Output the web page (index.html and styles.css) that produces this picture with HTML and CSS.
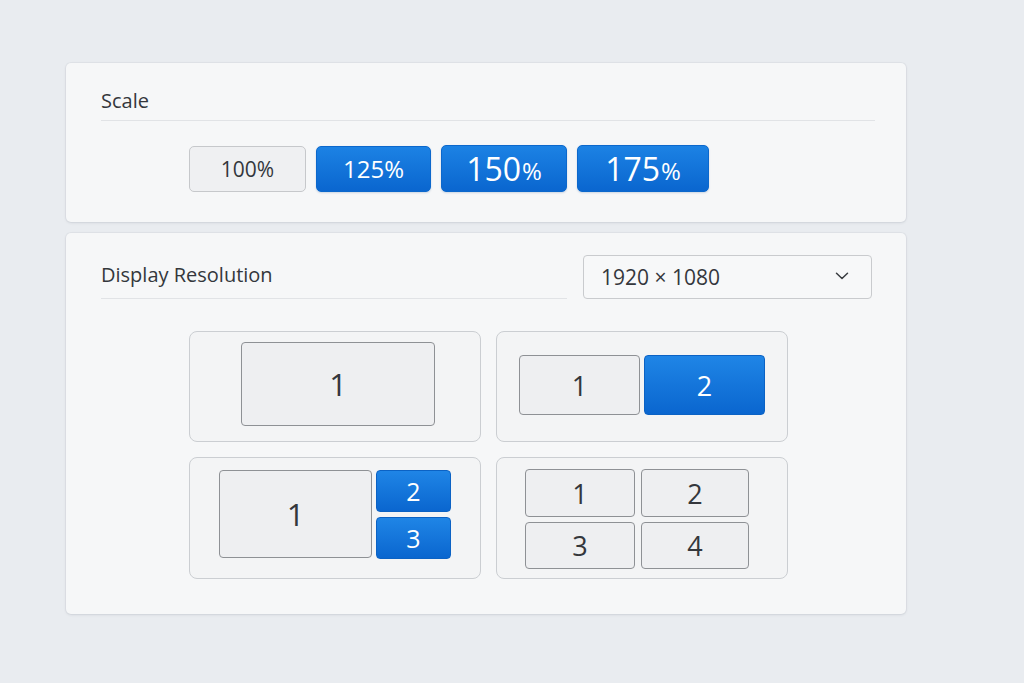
FILE: index.html
```html
<!DOCTYPE html>
<html>
<head>
<meta charset="utf-8">
<link rel="stylesheet" href="styles.css">
</head>
<body>
<main class="page">
  <section class="card card-scale">
    <h2 class="title">Scale</h2>
    <div class="divider"></div>
    <div class="scale-row">
      <button class="btn btn-grey s100">100%</button>
      <button class="btn btn-blue s125">125%</button>
      <button class="btn btn-blue s150">150<span class="pct">%</span></button>
      <button class="btn btn-blue s175">175<span class="pct">%</span></button>
    </div>
  </section>
  <section class="card card-res">
    <div class="res-head">
      <div class="res-title">
        <h2 class="title">Display Resolution</h2>
        <div class="divider"></div>
      </div>
      <div class="select">
        <span>1920 × 1080</span>
        <svg class="chev" width="14" height="8" viewBox="0 0 14 8"><path d="M1.5 1.2 L7 6.5 L12.5 1.2" fill="none" stroke="#3a3d42" stroke-width="1.5" stroke-linecap="round" stroke-linejoin="round"/></svg>
      </div>
    </div>
    <div class="tiles">
      <div class="tile t1">
        <div class="mon m-single">1</div>
      </div>
      <div class="tile t2">
        <div class="mon m-half">1</div>
        <div class="mon m-half blue">2</div>
      </div>
      <div class="tile t3">
        <div class="mon m-main">1</div>
        <div class="stack">
          <div class="mon m-small blue">2</div>
          <div class="mon m-small blue">3</div>
        </div>
      </div>
      <div class="tile t4">
        <div class="quad">
          <div class="mon m-q">1</div>
          <div class="mon m-q">2</div>
          <div class="mon m-q">3</div>
          <div class="mon m-q">4</div>
        </div>
      </div>
    </div>
  </section>
</main>
</body>
</html>
```

FILE: styles.css
```css
* { box-sizing: border-box; }
html, body { margin: 0; padding: 0; }
body {
  width: 1024px;
  height: 683px;
  background: #e9ecf0;
  font-family: "Open Sans", "Noto Sans", sans-serif;
  color: #34373c;
  overflow: hidden;
}
.page {
  padding: 63px 0 0 66px;
  display: flex;
  flex-direction: column;
  gap: 11px;
}
.card {
  width: 840px;
  background: #f6f7f8;
  border-radius: 5px;
  box-shadow: 0 1px 3px rgba(40, 50, 70, 0.10), 0 0 0 1px rgba(220, 223, 228, 0.6);
}
.card-scale {
  height: 159px;
  padding: 24px 31px 0 35px;
}
.title {
  margin: 0;
  font-size: 20px;
  font-weight: 400;
  line-height: 27px;
  color: #34373c;
}
.divider {
  height: 1px;
  background: #e1e3e6;
}
.card-scale .divider { margin-top: 6px; }
.scale-row {
  display: flex;
  gap: 10px;
  margin: 24px 0 0 88px;
  align-items: flex-end;
}
.btn {
  font-family: "Open Sans", "Noto Sans", sans-serif;
  height: 46px;
  border-radius: 5px;
  display: flex;
  align-items: center;
  justify-content: center;
  padding: 0;
  line-height: 1;
}
.btn-grey {
  background: #eff0f2;
  border: 1px solid #c6c8cb;
  color: #34373c;
}
.btn-blue {
  background: linear-gradient(#1c82e4, #0a66cf);
  border: 1px solid #0c68cc;
  color: #ffffff;
  box-shadow: 0 1px 2px rgba(10, 60, 130, 0.18);
}
.s100 { width: 117px; font-size: 21px; }
.s125 { width: 115px; font-size: 24px; }
.s150 { width: 126px; height: 47px; font-size: 32px; }
.s175 { width: 132px; height: 47px; font-size: 32px; }
.pct { font-size: 24px; margin-left: 1px; padding-top: 5px; }

.card-res {
  height: 381px;
  padding: 22px 34px 0 35px;
}
.res-head {
  display: flex;
  gap: 16px;
  align-items: flex-start;
}
.res-title {
  width: 466px;
  padding-top: 6px;
}
.res-title .divider { margin-top: 10px; }
.select {
  width: 289px;
  height: 44px;
  border: 1px solid #c9cbce;
  border-radius: 4px;
  background: #f7f8f9;
  display: flex;
  align-items: center;
  justify-content: space-between;
  padding: 0 22px 0 17px;
  font-size: 21px;
  color: #34373c;
}
.chev { margin-top: -3px; }

.tiles {
  margin: 32px 0 0 88px;
  display: grid;
  grid-template-columns: 292px 292px;
  grid-template-rows: 111px 122px;
  column-gap: 15px;
  row-gap: 15px;
}
.tile {
  border: 1px solid #cbced2;
  border-radius: 8px;
  background: #f3f4f5;
  display: flex;
  justify-content: center;
}
.mon {
  background: #eeeff1;
  border: 1px solid #8e9195;
  border-radius: 4px;
  display: flex;
  align-items: center;
  justify-content: center;
  color: #34373c;
  font-weight: 500;
  line-height: 1;
}
.mon.blue {
  background: linear-gradient(#1f85e6, #0a66cf);
  border-color: #0b62c4;
  color: #ffffff;
}
.t1 { padding: 10px 0 0 6px; }
.m-single { width: 194px; height: 84px; font-size: 31px; }
.t2 { align-items: flex-start; padding-top: 23px; gap: 4px; }
.m-half { width: 121px; height: 60px; font-size: 27px; }
.t3 { padding-top: 12px; gap: 4px; }
.m-main { width: 153px; height: 88px; font-size: 31px; }
.stack { display: flex; flex-direction: column; gap: 5px; }
.m-small { width: 75px; height: 42px; font-size: 25px; }
.t4 { padding: 11px 10px 0 0; }
.quad {
  display: grid;
  grid-template-columns: 110px 108px;
  grid-template-rows: 48px 47px;
  column-gap: 6px;
  row-gap: 5px;
}
.m-q { font-size: 27px; }
```
